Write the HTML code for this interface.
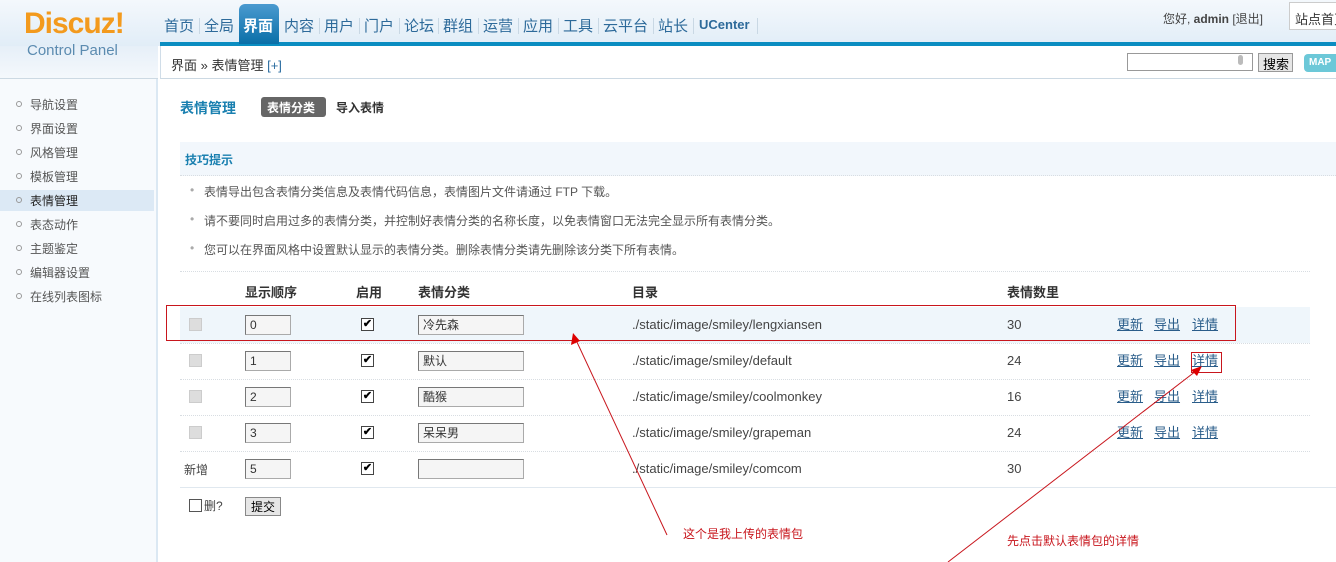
<!DOCTYPE html>
<html><head><meta charset="utf-8">
<style>
*{margin:0;padding:0;box-sizing:border-box}
body{width:1336px;height:562px;overflow:hidden;position:relative;background:#fff;font-family:"Liberation Sans","Noto Sans CJK SC",sans-serif;font-size:12px;color:#444}
.abs{position:absolute;white-space:nowrap}
#hdr{position:absolute;left:0;top:0;width:1336px;height:46px;background:linear-gradient(#f4f8fc,#e1edf7)}
#bar{position:absolute;left:160px;top:42px;width:1176px;height:4px;background:#0a8dc1}
#side{position:absolute;left:0;top:79px;width:158px;height:483px;background:#f7fafd;border-right:2px solid #dbe8f3}
#sidetop{position:absolute;left:0;top:46px;width:158px;height:33px;background:linear-gradient(#e6eff8,#f4f8fc);border-bottom:1px solid #ccd9e3}
#crumb{position:absolute;left:160px;top:46px;width:1176px;height:33px;background:#fff;border-left:1px solid #d0dde8;border-bottom:1px solid #ccd9e3}
.nav{position:absolute;top:15px;font-size:15px;color:#2d6a9a}
.sep{position:absolute;top:18px;width:1px;height:16px;background:#c9d8e4}
.si{position:absolute;left:30px;font-size:12px;color:#555}
.bul{position:absolute;left:16px;width:6px;height:6px;border:1px solid #999;border-radius:50%}
.inp{position:absolute;height:20px;border:1px solid #aaa;border-top-color:#777;border-left-color:#777;background:#f5f5f5;font-size:12px;padding:0 4px;line-height:18px;color:#333}
.chk{position:absolute;width:13px;height:13px;border:1px solid #444;background:#fff;font-size:11px;line-height:11px;text-align:center;color:#000;font-weight:bold}
.gchk{position:absolute;left:189px;width:13px;height:13px;background:#ddd;border:1px solid #ccc}
.dot{position:absolute;left:180px;width:1130px;border-top:1px dotted #d8dde2}
.ln{position:absolute;font-size:13px;line-height:15px}
a{color:#2a5d8a;text-decoration:underline}
</style></head><body>
<div id="hdr"></div>
<div id="sidetop"></div>
<div id="side"></div>
<div id="bar"></div>
<div id="crumb"></div>
<div class="abs" style="left:24px;top:8px;font-size:30px;font-weight:bold;color:#f39a1d;letter-spacing:-1px;line-height:32px">Discuz!</div>
<div class="abs" style="left:27px;top:42px;font-size:15px;color:#5b8bb0">Control Panel</div>
<div style="position:absolute;left:239px;top:4px;width:40px;height:40px;background:linear-gradient(#4a9ad0,#0a6fa8);border-radius:6px 6px 0 0"></div>
<div class="nav" style="left:164px">首页</div><div class="sep" style="left:199px"></div>
<div class="nav" style="left:204px">全局</div>
<div class="nav" style="left:243px;color:#fff;font-weight:bold">界面</div>
<div class="nav" style="left:284px">内容</div><div class="sep" style="left:319px"></div>
<div class="nav" style="left:324px">用户</div><div class="sep" style="left:359px"></div>
<div class="nav" style="left:364px">门户</div><div class="sep" style="left:399px"></div>
<div class="nav" style="left:404px">论坛</div><div class="sep" style="left:438px"></div>
<div class="nav" style="left:443px">群组</div><div class="sep" style="left:478px"></div>
<div class="nav" style="left:483px">运营</div><div class="sep" style="left:518px"></div>
<div class="nav" style="left:523px">应用</div><div class="sep" style="left:558px"></div>
<div class="nav" style="left:563px">工具</div><div class="sep" style="left:598px"></div>
<div class="nav" style="left:603px">云平台</div><div class="sep" style="left:653px"></div>
<div class="nav" style="left:658px">站长</div><div class="sep" style="left:693px"></div>
<div class="nav" style="left:699px;font-size:13px;top:17px;font-weight:bold">UCenter</div><div class="sep" style="left:757px"></div>
<div class="abs" style="left:1163px;top:10px;font-size:12px;color:#444">您好, <b>admin</b> [退出]</div>
<div style="position:absolute;left:1289px;top:2px;width:60px;height:28px;border:1px solid #ccc;background:#fff"></div>
<div class="abs" style="left:1295px;top:9px;font-size:13px;color:#333">站点首页</div>
<div class="abs" style="left:171px;top:55px;font-size:13px;color:#333">界面 » 表情管理 <span style="color:#2a6ca0">[+]</span></div>
<div style="position:absolute;left:1127px;top:53px;width:126px;height:18px;border:1px solid #999;background:#fff"></div>
<div class="abs" style="left:1238px;top:55px;width:5px;height:10px;background:#bbb;border-radius:3px"></div>
<div style="position:absolute;left:1258px;top:53px;width:35px;height:19px;background:#e6e6e6;border:1px solid #999"></div>
<div class="abs" style="left:1263px;top:54px;font-size:13px;color:#000">搜索</div>
<div style="position:absolute;left:1304px;top:54px;width:40px;height:18px;background:#6cc8d8;border-radius:4px"></div>
<div class="abs" style="left:1309px;top:57px;font-size:10px;font-weight:bold;color:#fff">MAP</div>

<div class="bul" style="top:101px"></div><div class="si" style="top:96px">导航设置</div>
<div class="bul" style="top:125px"></div><div class="si" style="top:120px">界面设置</div>
<div class="bul" style="top:149px"></div><div class="si" style="top:144px">风格管理</div>
<div class="bul" style="top:173px"></div><div class="si" style="top:168px">模板管理</div>
<div style="position:absolute;left:0;top:190px;width:154px;height:21px;background:#dce9f5"></div>
<div class="bul" style="top:197px"></div><div class="si" style="top:192px;color:#222">表情管理</div>
<div class="bul" style="top:221px"></div><div class="si" style="top:216px">表态动作</div>
<div class="bul" style="top:245px"></div><div class="si" style="top:240px">主题鉴定</div>
<div class="bul" style="top:269px"></div><div class="si" style="top:264px">编辑器设置</div>
<div class="bul" style="top:293px"></div><div class="si" style="top:288px">在线列表图标</div>

<div class="abs" style="left:180px;top:98px;font-size:14px;font-weight:bold;color:#1a80b0">表情管理</div>
<div style="position:absolute;left:261px;top:97px;width:65px;height:20px;background:#666;border-radius:3px"></div>
<div class="abs" style="left:267px;top:99px;font-size:12px;font-weight:bold;color:#fff">表情分类</div>
<div class="abs" style="left:336px;top:99px;font-size:12px;font-weight:bold;color:#333">导入表情</div>

<div style="position:absolute;left:180px;top:142px;width:1156px;height:34px;background:#f2f7fc;border-bottom:1px dotted #d8dde2"></div>
<div class="abs" style="left:185px;top:151px;font-size:12px;font-weight:bold;color:#1a80b0">技巧提示</div>
<div class="abs" style="left:190px;top:183px;color:#aaa">•</div><div class="abs" style="left:204px;top:183px;color:#555">表情导出包含表情分类信息及表情代码信息，表情图片文件请通过 FTP 下载。</div>
<div class="abs" style="left:190px;top:212px;color:#aaa">•</div><div class="abs" style="left:204px;top:212px;color:#555">请不要同时启用过多的表情分类，并控制好表情分类的名称长度，以免表情窗口无法完全显示所有表情分类。</div>
<div class="abs" style="left:190px;top:241px;color:#aaa">•</div><div class="abs" style="left:204px;top:241px;color:#555">您可以在界面风格中设置默认显示的表情分类。删除表情分类请先删除该分类下所有表情。</div>
<div class="dot" style="top:271px"></div>

<div class="abs" style="left:245px;top:282px;font-weight:bold;font-size:13px;color:#333">显示顺序</div>
<div class="abs" style="left:356px;top:282px;font-weight:bold;font-size:13px;color:#333">启用</div>
<div class="abs" style="left:418px;top:282px;font-weight:bold;font-size:13px;color:#333">表情分类</div>
<div class="abs" style="left:632px;top:282px;font-weight:bold;font-size:13px;color:#333">目录</div>
<div class="abs" style="left:1007px;top:282px;font-weight:bold;font-size:13px;color:#333">表情数里</div>

<div style="position:absolute;left:180px;top:307px;width:1130px;height:36px;background:#eff6fb"></div>
<div class="dot" style="top:343px"></div>
<div class="dot" style="top:379px"></div>
<div class="dot" style="top:415px"></div>
<div class="dot" style="top:451px"></div>
<div style="position:absolute;left:180px;top:487px;width:1156px;border-top:1px solid #e0e8ef"></div>

<div class="gchk" style="top:318px"></div><div class="inp" style="left:245px;top:315px;width:46px">0</div><div class="chk" style="left:361px;top:318px">✔</div><div class="inp" style="left:418px;top:315px;width:106px">冷先森</div>
<div class="abs" style="left:632px;top:317px;font-size:13px;color:#444">./static/image/smiley/lengxiansen</div><div class="abs" style="left:1007px;top:317px;font-size:13px">30</div>
<div class="ln" style="left:1117px;top:317px"><a>更新</a></div><div class="ln" style="left:1154px;top:317px"><a>导出</a></div><div class="ln" style="left:1192px;top:317px"><a>详情</a></div>

<div class="gchk" style="top:354px"></div><div class="inp" style="left:245px;top:351px;width:46px">1</div><div class="chk" style="left:361px;top:354px">✔</div><div class="inp" style="left:418px;top:351px;width:106px">默认</div>
<div class="abs" style="left:632px;top:353px;font-size:13px">./static/image/smiley/default</div><div class="abs" style="left:1007px;top:353px;font-size:13px">24</div>
<div class="ln" style="left:1117px;top:353px"><a>更新</a></div><div class="ln" style="left:1154px;top:353px"><a>导出</a></div><div class="ln" style="left:1192px;top:353px"><a>详情</a></div>

<div class="gchk" style="top:390px"></div><div class="inp" style="left:245px;top:387px;width:46px">2</div><div class="chk" style="left:361px;top:390px">✔</div><div class="inp" style="left:418px;top:387px;width:106px">酷猴</div>
<div class="abs" style="left:632px;top:389px;font-size:13px">./static/image/smiley/coolmonkey</div><div class="abs" style="left:1007px;top:389px;font-size:13px">16</div>
<div class="ln" style="left:1117px;top:389px"><a>更新</a></div><div class="ln" style="left:1154px;top:389px"><a>导出</a></div><div class="ln" style="left:1192px;top:389px"><a>详情</a></div>

<div class="gchk" style="top:426px"></div><div class="inp" style="left:245px;top:423px;width:46px">3</div><div class="chk" style="left:361px;top:426px">✔</div><div class="inp" style="left:418px;top:423px;width:106px">呆呆男</div>
<div class="abs" style="left:632px;top:425px;font-size:13px">./static/image/smiley/grapeman</div><div class="abs" style="left:1007px;top:425px;font-size:13px">24</div>
<div class="ln" style="left:1117px;top:425px"><a>更新</a></div><div class="ln" style="left:1154px;top:425px"><a>导出</a></div><div class="ln" style="left:1192px;top:425px"><a>详情</a></div>

<div class="abs" style="left:184px;top:461px;font-size:12px">新增</div><div class="inp" style="left:245px;top:459px;width:46px">5</div><div class="chk" style="left:361px;top:462px">✔</div><div class="inp" style="left:418px;top:459px;width:106px"></div>
<div class="abs" style="left:632px;top:461px;font-size:13px">./static/image/smiley/comcom</div><div class="abs" style="left:1007px;top:461px;font-size:13px">30</div>

<div style="position:absolute;left:189px;top:499px;width:13px;height:13px;border:1px solid #555;background:#fff"></div>
<div class="abs" style="left:204px;top:497px;font-size:12px">删?</div>
<div style="position:absolute;left:245px;top:497px;width:36px;height:19px;background:#e6e6e6;border:1px solid #888"></div>
<div class="abs" style="left:251px;top:498px;font-size:12px;color:#000">提交</div>

<div style="position:absolute;left:166px;top:305px;width:1070px;height:36px;border:1px solid #c8161d"></div>
<div style="position:absolute;left:1191px;top:352px;width:31px;height:21px;border:1px solid #c8161d"></div>
<svg style="position:absolute;left:0;top:0" width="1336" height="562">
<line x1="667" y1="535" x2="576" y2="340" stroke="#c8161d" stroke-width="1"/>
<polygon points="573,333 571,345 580,341" fill="#d00"/>
<line x1="948" y1="562" x2="1196" y2="371" stroke="#c8161d" stroke-width="1"/>
<polygon points="1202,366 1191,370 1197,376" fill="#d00"/>
</svg>
<div class="abs" style="left:683px;top:525px;font-size:12px;color:#c8161d">这个是我上传的表情包</div>
<div class="abs" style="left:1007px;top:532px;font-size:12px;color:#c8161d">先点击默认表情包的详情</div>
</body></html>
